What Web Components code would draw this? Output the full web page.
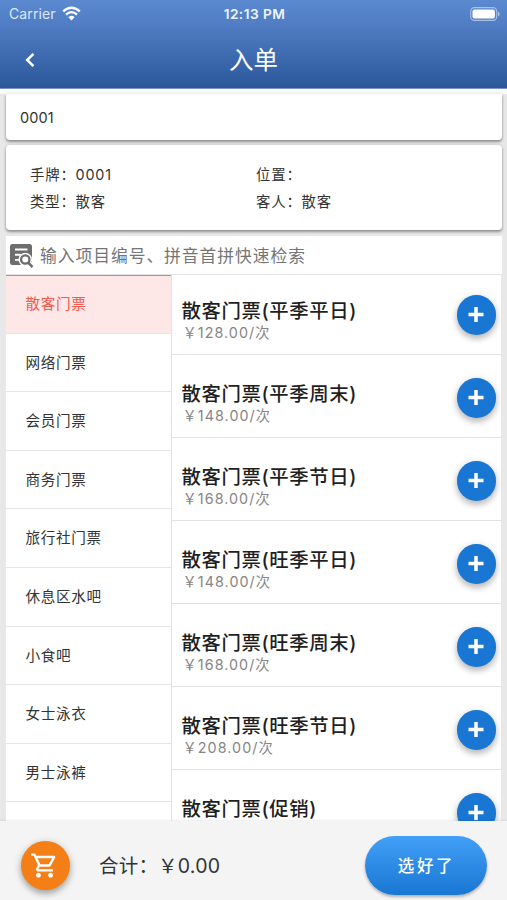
<!DOCTYPE html>
<html lang="zh-CN">
<head>
<meta charset="utf-8">
<title>入单</title>
<style>
html,body{margin:0;height:100%}
body{font-family:Inter,"Noto Sans CJK SC",sans-serif;background:#e8e8e8;color:#333;overflow:hidden}
</style>
</head>
<body>
<order-page></order-page>
<script>
function define(name, html, setup){
  const t=document.createElement('template');
  t.innerHTML=html;
  customElements.define(name, class extends HTMLElement{
    constructor(){super();this.attachShadow({mode:'open'}).appendChild(t.content.cloneNode(true));}
    connectedCallback(){if(setup)setup(this,this.shadowRoot);}
  });
}

define('status-bar',`<style>
:host{display:grid;grid-template-columns:1fr auto 1fr;align-items:center;height:28px;padding:0 7px 0 9px;box-sizing:border-box;color:#eef4ff;font-size:14px;line-height:28px}
.l{display:flex;align-items:center;gap:6px;color:#dce8fb;letter-spacing:.1px}
.t{font-weight:600;font-size:13.7px;letter-spacing:.45px}
.r{justify-self:end;display:flex;margin-top:-1px}
svg{display:block}
.l svg{margin-top:-2px}
</style>
<div class="l"><span>Carrier</span><svg width="19" height="15" viewBox="0 0 19 15"><path d="M1.2 5.4Q9.5-2 17.8 5.4" fill="none" stroke="#fff" stroke-width="2.4"/><path d="M4 8.6Q9.5 3.6 15 8.6" fill="none" stroke="#fff" stroke-width="2.3"/><path d="M6.4 11.2Q9.5 8.4 12.6 11.2L9.5 14.4Z" fill="#fff"/></svg></div>
<div class="t">12:13 PM</div>
<div class="r"><svg width="30" height="14" viewBox="0 0 30 14"><rect x=".7" y=".6" width="26" height="12.8" rx="3.8" fill="none" stroke="#a6c0ea" stroke-width="1.1"/><rect x="2.5" y="2.4" width="22.4" height="9.2" rx="2" fill="#fff"/><path d="M28 4.6q1.8 1 1.8 2.4T28 9.4z" fill="#a6c0ea"/></svg></div>`);

define('nav-header',`<style>
:host{display:block;height:88px;background:linear-gradient(#5c8ad1,#4572b7 50%,#2b579b);border-bottom:1px solid #7994bd;color:#fff}
.bar{display:grid;grid-template-columns:60px 1fr 60px;align-items:center;height:60px;padding-top:3px;box-sizing:border-box}
svg{margin-left:24px;display:block}
h1{margin:0;text-align:center;font-weight:400;font-size:24.5px;line-height:34px}
</style>
<status-bar></status-bar>
<div class="bar"><svg width="12" height="16" viewBox="0 0 12 16" fill="none" stroke="#fff" stroke-width="2.5"><path d="M9.4 1.8 3.2 8l6.2 6.2"/></svg><h1><slot></slot></h1></div>`);

define('info-card',`<style>
:host{display:block;background:#fff;border-radius:4px;box-shadow:0 2px 3px rgba(0,0,0,.36),0 0 3px rgba(0,0,0,.12);box-sizing:border-box}
</style><slot></slot>`);

define('info-field',`<style>
:host{display:block;font-size:14.4px;line-height:27px;letter-spacing:.8px;white-space:pre}
</style><slot></slot>`);

define('search-box',`<style>
:host{display:flex;align-items:center;height:39px;background:#fff;padding-left:3px;box-sizing:border-box;color:#757575;font-size:16.8px;letter-spacing:.95px;border-bottom:1px solid #e2e2e2}
svg{display:block;margin:1px 6px 0 0}
</style>
<svg width="25" height="26" viewBox="0 0 25 26"><path d="M3.500 1h17q2.500 0 2.500 2.500V22H3.500Q1 22 1 19.500v-16Q1 1 3.500 1z" fill="#6d6d6d"/><path d="M6 6.500h12.500M6 11.700h6M6 16.900h4" stroke="#fff" stroke-width="1.900"/><path d="m16.300 16.900 9 9" stroke="#fff" stroke-width="5.500"/><circle cx="16.300" cy="16.500" r="6.800" fill="#fff"/><path d="M19.400 19.700h6V26h-8z" fill="#fff"/><circle cx="16.300" cy="16.500" r="4.200" fill="none" stroke="#6d6d6d" stroke-width="2.300"/><path d="m19.300 19.600 4.200 4.600" stroke="#6d6d6d" stroke-width="2.500"/></svg>
<span><slot></slot></span>`);

define('category-item',`<style>
:host{display:block;height:58.6px;box-sizing:border-box;border-bottom:1.500px solid #e4e4e4;padding-left:19.500px;font-size:14.600px;letter-spacing:.650px;line-height:58px;color:#333}
:host([active]){background:#fee8e7;color:#f9564c}
:host([active]:first-child){box-shadow:inset 0 1px #b78e92}
</style><slot></slot>`);

define('product-item',`<style>
:host{display:flex;justify-content:space-between;height:83px;box-sizing:border-box;border-bottom:1px solid #e2e2e2;padding:23px 5px 0 10px}
h2{margin:3px 0 0;font-size:19.400px;line-height:26px;font-weight:500;letter-spacing:.600px;color:#1f1f1f;white-space:nowrap}
p{margin:0 0 0 1px;font-size:14.300px;line-height:18px;letter-spacing:1.050px;color:#858585}
button{width:39.500px;height:39.500px;border:0;padding:0;border-radius:50%;background:#1976d2;box-shadow:0 4px 6px rgba(0,0,0,.22),0 1px 9px rgba(0,0,0,.12);display:grid;place-items:center}
</style><div><h2><slot></slot></h2></div><button aria-label="添加"><svg width="16" height="16" viewBox="0 0 16 16"><path d="M8 0v15M.5 7.500h15" stroke="#fff" stroke-width="3.500"/></svg></button>`,
(el,r)=>{
  if(!el.hasAttribute('price'))return;
  const p=document.createElement('p');
  p.textContent='￥'+el.getAttribute('price')+'/次';
  r.querySelector('div').append(p);
});

define('checkout-bar',`<style>
:host{display:flex;align-items:center;height:79px;background:#f4f4f4;box-sizing:border-box;padding:9px 20px 0 21px;position:relative;box-shadow:0 -1px 2px rgba(0,0,0,.08)}
.cart{width:49px;height:49px;border-radius:50%;background:#f57f17;display:grid;place-items:center;box-shadow:0 4px 6px rgba(0,0,0,.25),0 1px 9px rgba(0,0,0,.14)}
.cart svg{margin-right:2px}
.sum{margin:-1px 0 0 29px;font-size:19.500px;letter-spacing:.2px;flex:1;color:#333;white-space:nowrap}
button{width:122px;height:59px;border:0;border-radius:30px;background:linear-gradient(#42a0f8,#1976d2);color:#fff;font:500 16.500px Inter,"Noto Sans CJK SC",sans-serif;letter-spacing:2.600px;padding:0 0 0 1px;box-shadow:0 2px 3px rgba(0,0,0,.28)}
</style>
<div class="cart"><svg width="29" height="29" viewBox="0 0 24 24" fill="#fff"><path d="M15.550 13c.75 0 1.410-.41 1.750-1.030l3.580-6.490A.996.996 0 0 0 20.010 4H5.210l-.94-2H1v2h2l3.600 7.590-1.350 2.440C4.520 15.370 5.480 17 7 17h12v-2H7l1.100-2h7.450zM6.160 6h12.150l-2.760 5H8.530L6.160 6zM7 18c-1.100 0-1.990.9-1.990 2S5.900 22 7 22s2-.9 2-2-.9-2-2-2zm10 0c-1.100 0-1.990.9-1.990 2s.89 2 1.990 2 2-.9 2-2-.9-2-2-2z"/></svg></div>
<div class="sum">合计：￥0.00</div><button>选好了</button>`);

define('order-page',`<style>
:host{display:flex;flex-direction:column;height:900px;width:507px}
.top{height:5px;background:#fafbfe}
main{flex:1;min-height:0;display:flex;flex-direction:column;padding:0 5px 0 6px}
.no{height:46px;border-radius:0 0 4px 4px;padding:0 14px;font-size:14.500px;line-height:48px;letter-spacing:.1px}
.info{height:85px;margin-top:5px;padding:16px 24px 0;display:grid;grid-template-columns:226px 1fr;grid-auto-rows:27px}
search-box{margin-top:6px}
.lists{flex:1;min-height:0;display:grid;grid-template-columns:165.500px 1fr;overflow:hidden;background:#fff;margin-right:1px}
.lists>div{overflow:hidden;min-height:0}
.cats{border-right:1px solid #e2e2e2}
.goods{margin-top:-3px}
</style>
<nav-header>入单</nav-header><div class="top"></div>
<main>
<info-card class="no">0001</info-card>
<info-card class="info"><info-field>手牌：0001</info-field><info-field>位置：</info-field><info-field>类型：散客</info-field><info-field>客人：散客</info-field></info-card>
<search-box>输入项目编号、拼音首拼快速检索</search-box>
<div class="lists"><div class="cats">
<category-item active>散客门票</category-item><category-item>网络门票</category-item><category-item>会员门票</category-item><category-item>商务门票</category-item><category-item>旅行社门票</category-item><category-item>休息区水吧</category-item><category-item>小食吧</category-item><category-item>女士泳衣</category-item><category-item>男士泳裤</category-item><category-item></category-item>
</div><div class="goods">
<product-item price="128.00">散客门票(平季平日)</product-item><product-item price="148.00">散客门票(平季周末)</product-item><product-item price="168.00">散客门票(平季节日)</product-item><product-item price="148.00">散客门票(旺季平日)</product-item><product-item price="168.00">散客门票(旺季周末)</product-item><product-item price="208.00">散客门票(旺季节日)</product-item><product-item>散客门票(促销)</product-item>
</div></div>
</main>
<checkout-bar></checkout-bar>`);
</script>
</body>
</html>
